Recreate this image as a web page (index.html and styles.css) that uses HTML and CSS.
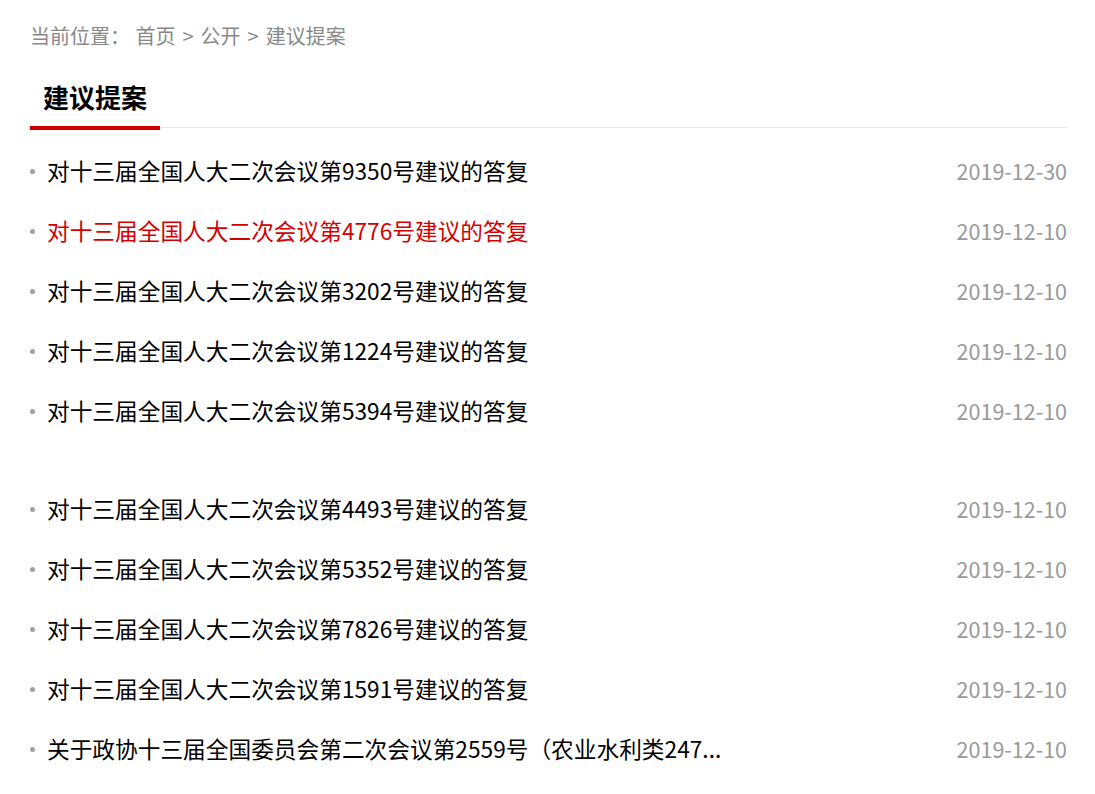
FILE: index.html
```html
<!DOCTYPE html>
<html>
<head>
    <meta charset="utf-8">
    <title>建议提案</title>
    <link rel="stylesheet" href="styles.css">
</head>
<body>
    <div class="page">
        <div class="crumb">
            <span class="crumb-label">当前位置：</span>
            <a href="#">首页</a><span class="sep">&gt;</span><a href="#">公开</a><span class="sep">&gt;</span><a href="#">建议提案</a>
        </div>

        <div class="column-head">
            <span class="column-tab">建议提案</span>
        </div>

        <ul class="news-list">
            <li><a href="#">对十三届全国人大二次会议第9350号建议的答复</a><span class="date">2019-12-30</span></li>
            <li><a href="#" class="active">对十三届全国人大二次会议第4776号建议的答复</a><span class="date">2019-12-10</span></li>
            <li><a href="#">对十三届全国人大二次会议第3202号建议的答复</a><span class="date">2019-12-10</span></li>
            <li><a href="#">对十三届全国人大二次会议第1224号建议的答复</a><span class="date">2019-12-10</span></li>
            <li><a href="#">对十三届全国人大二次会议第5394号建议的答复</a><span class="date">2019-12-10</span></li>
        </ul>
        <ul class="news-list">
            <li><a href="#">对十三届全国人大二次会议第4493号建议的答复</a><span class="date">2019-12-10</span></li>
            <li><a href="#">对十三届全国人大二次会议第5352号建议的答复</a><span class="date">2019-12-10</span></li>
            <li><a href="#">对十三届全国人大二次会议第7826号建议的答复</a><span class="date">2019-12-10</span></li>
            <li><a href="#">对十三届全国人大二次会议第1591号建议的答复</a><span class="date">2019-12-10</span></li>
            <li><a href="#">关于政协十三届全国委员会第二次会议第2559号（农业水利类247...</a><span class="date">2019-12-10</span></li>
        </ul>
    </div>
</body>
</html>
```

FILE: styles.css
```css
body {
    margin: 0;
    font-family: "Noto Sans CJK SC", "Noto Sans", sans-serif;
    color: #000;
    background: #fff;
}
a {
    color: inherit;
    text-decoration: none;
}
.page {
    width: 1037px;
    padding: 23px 0 0 30px;
}
.crumb {
    font-size: 20px;
    line-height: 26px;
    color: #888;
}
.crumb-label {
    margin-right: 1px;
}
.crumb .sep {
    margin: 0 7px;
}
.column-head {
    margin-top: 30px;
    border-bottom: 1px solid #e8e8e8;
}
.column-tab {
    display: inline-block;
    padding: 0 13px 11px;
    font-size: 26px;
    line-height: 36px;
    font-weight: bold;
    border-bottom: 4px solid #d40000;
    margin-bottom: -3px;
    vertical-align: bottom;
}
.news-list {
    list-style: none;
    margin: 12px 0 0;
    padding: 0;
}
.news-list + .news-list {
    margin-top: 38px;
}
.news-list li {
    display: flex;
    justify-content: space-between;
    align-items: center;
    height: 60px;
    font-size: 22.7px;
    padding-left: 17px;
    position: relative;
}
.news-list li::before {
    content: "";
    position: absolute;
    left: 0;
    top: 50%;
    width: 5px;
    height: 5px;
    margin-top: -1px;
    border-radius: 50%;
    background: #a0a0a0;
}
.news-list a.active {
    color: #d40000;
}
.date {
    font-size: 21.5px;
    color: #999;
}
```
